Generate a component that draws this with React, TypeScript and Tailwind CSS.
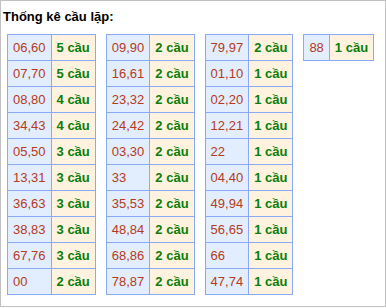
import React from 'react';

type Row = [string, number];

const columns: Row[][] = [
  [
    ['06,60', 5], ['07,70', 5], ['08,80', 4], ['34,43', 4], ['05,50', 3],
    ['13,31', 3], ['36,63', 3], ['38,83', 3], ['67,76', 3], ['00', 2],
  ],
  [
    ['09,90', 2], ['16,61', 2], ['23,32', 2], ['24,42', 2], ['03,30', 2],
    ['33', 2], ['35,53', 2], ['48,84', 2], ['68,86', 2], ['78,87', 2],
  ],
  [
    ['79,97', 2], ['01,10', 1], ['02,20', 1], ['12,21', 1], ['22', 1],
    ['04,40', 1], ['49,94', 1], ['56,65', 1], ['66', 1], ['47,74', 1],
  ],
  [['88', 1]],
];

const LoTable: React.FC<{ rows: Row[] }> = ({ rows }) => (
  <table className="border-collapse border border-[#8aaaf5] text-[13px] leading-[15px]">
    <tbody>
      {rows.map(([pair, count]) => (
        <tr key={pair}>
          <td className="border border-[#8aaaf5] bg-[#e2eefe] px-[5px] py-[5px] text-[#b53a21] whitespace-nowrap">
            {pair}
          </td>
          <td className="border border-[#8aaaf5] bg-[#fff3df] px-[5px] py-[5px] font-bold text-[#0a7d0a] whitespace-nowrap">
            {count} cầu
          </td>
        </tr>
      ))}
    </tbody>
  </table>
);

export default function App() {
  return (
    <div
      className="w-[386px] h-[307px] border border-[#c2c2c2] bg-white"
      style={{ fontFamily: '"Liberation Sans", Arial, sans-serif' }}
    >
      <div className="pt-[8px] pl-[2px] text-[13px] leading-[15px] font-bold text-black">
        Thống kê cầu lặp:
      </div>
      <div className="flex items-start gap-[10px] pl-[6px] pt-[10px]">
        {columns.map((rows, i) => (
          <LoTable key={i} rows={rows} />
        ))}
      </div>
    </div>
  );
}
